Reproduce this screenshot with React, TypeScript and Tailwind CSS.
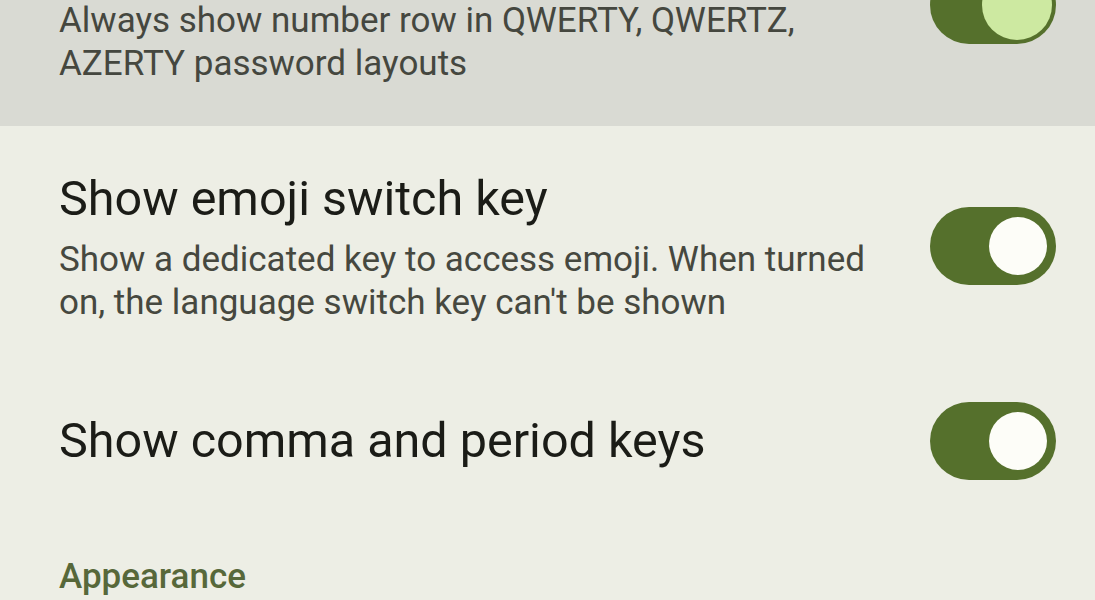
import React from "react";

const Toggle = ({ pressed = false, className = "" }: { pressed?: boolean; className?: string }) => {
  return (
    <div className={`w-[126px] h-[78px] rounded-full bg-[#55702c] flex items-center justify-end pr-[9px] shrink-0 ${className}`}>
      {pressed ? (
        <div className="w-[70px] h-[70px] -mr-[5px] rounded-full bg-[#cde9a1]"></div>
      ) : (
        <div className="w-[58px] h-[58px] rounded-full bg-[#fdfdf8]"></div>
      )}
    </div>
  );
};

const App = () => {
  return (
    <div className="w-[1095px] h-[600px] overflow-hidden bg-[#edeee5] font-['Roboto',sans-serif]">
      {/* pressed row, scrolled partly off the top */}
      <div className="h-[126px] bg-[#d9dad3] overflow-hidden">
        <div className="flex items-center justify-between pl-[59px] pr-[39px] -mt-[34px] h-[78px]">
          <div></div>
          <Toggle pressed />
        </div>
        <div className="-mt-[45px] pl-[59px] text-[35px] leading-[43px] text-[#45473f]">
          <p>Always show number row in QWERTY, QWERTZ,</p>
          <p>AZERTY password layouts</p>
        </div>
      </div>

      {/* emoji switch key */}
      <div className="flex items-center justify-between pl-[59px] pr-[39px] pt-[47px]">
        <div>
          <p className="text-[48.5px] leading-[52px] text-[#1b1c17]">Show emoji switch key</p>
          <p className="mt-[13px] text-[35px] leading-[43px] text-[#46483f]">
            Show a dedicated key to access emoji. When turned
            <br />
            on, the language switch key can't be shown
          </p>
        </div>
        <Toggle className="mb-[6px]" />
      </div>

      {/* comma and period */}
      <div className="flex items-center justify-between pl-[59px] pr-[39px] mt-[78px]">
        <p className="text-[48.5px] leading-[52px] text-[#1b1c17]">Show comma and period keys</p>
        <Toggle />
      </div>

      <div className="pl-[59px] mt-[77px]">
        <p className="text-[35px] leading-[40px] font-medium text-[#57683a]">Appearance</p>
      </div>
    </div>
  );
};

export default App;
